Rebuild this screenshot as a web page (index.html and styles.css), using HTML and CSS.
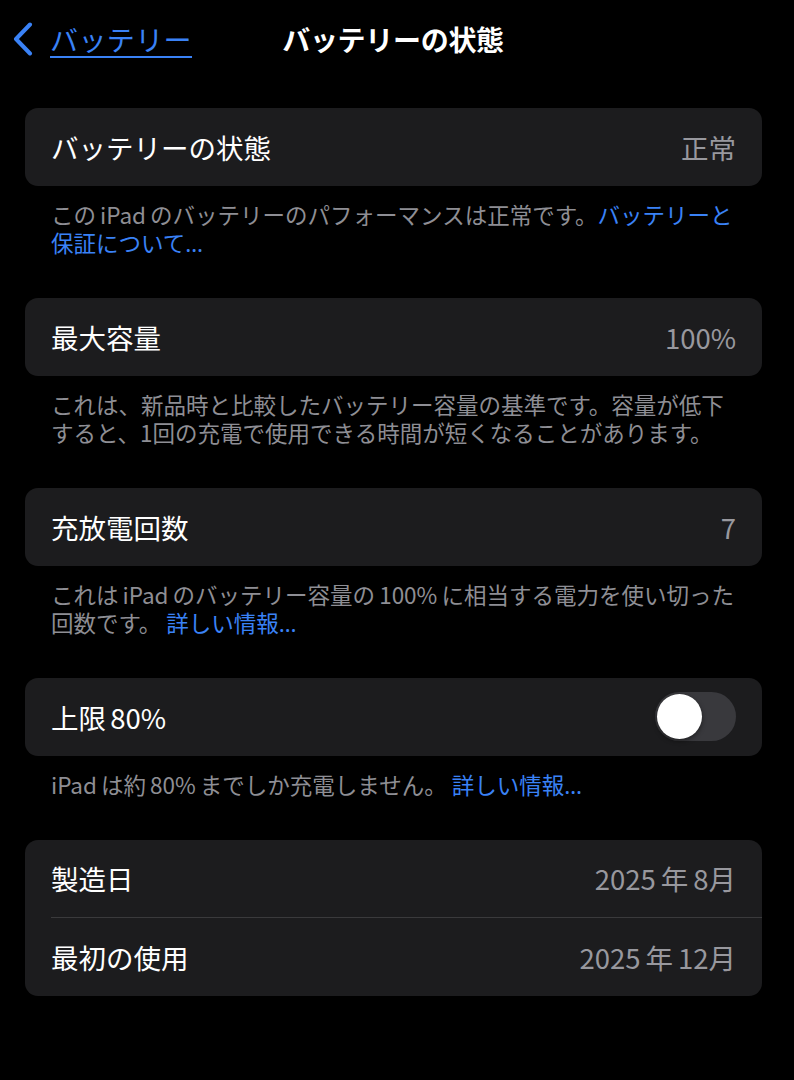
FILE: index.html
```html
<!DOCTYPE html>
<html lang="ja">
<head>
<meta charset="utf-8">
<title>バッテリーの状態</title>
<link rel="stylesheet" href="styles.css">
</head>
<body>
<div class="page">
  <header class="nav">
    <a class="back" href="#">
      <svg class="chev" width="22" height="34" viewBox="0 0 22 34"><polyline points="18,2.5 4,17 18,31.5" fill="none" stroke="#3a82f6" stroke-width="4" stroke-linecap="round" stroke-linejoin="round"/></svg>
      <span class="back-text">バッテリー</span>
    </a>
    <h1 class="title">バッテリーの状態</h1>
    <div class="nav-spacer"></div>
  </header>

  <main class="list">
    <section class="group">
      <div class="card">
        <div class="row"><span class="label">バッテリーの状態</span><span class="value">正常</span></div>
      </div>
      <p class="foot">この<span class="lat">iPad</span>のバッテリーのパフォーマンスは正常です。<a class="link" href="#">バッテリーと<br>保証について<span class="ell">…</span></a></p>
    </section>

    <section class="group">
      <div class="card">
        <div class="row"><span class="label">最大容量</span><span class="value">100%</span></div>
      </div>
      <p class="foot">これは、新品時と比較したバッテリー容量の基準です。容量が低下<br>すると、1回の充電で使用できる時間が短くなることがあります。</p>
    </section>

    <section class="group">
      <div class="card">
        <div class="row"><span class="label">充放電回数</span><span class="value">7</span></div>
      </div>
      <p class="foot">これは<span class="lat">iPad</span>のバッテリー容量の<span class="lat">100%</span>に相当する電力を使い切った<br>回数です。 <a class="link" href="#">詳しい情報<span class="ell">…</span></a></p>
    </section>

    <section class="group">
      <div class="card">
        <div class="row"><span class="label">上限<span class="latr">80%</span></span><span class="toggle"><span class="knob"></span></span></div>
      </div>
      <p class="foot"><span class="latr">iPad</span>は約<span class="lat">80%</span>までしか充電しません。 <a class="link" href="#">詳しい情報<span class="ell">…</span></a></p>
    </section>

    <section class="group">
      <div class="card">
        <div class="row"><span class="label">製造日</span><span class="value">2025<span class="lat">年</span>8月</span></div>
        <div class="sep"></div>
        <div class="row"><span class="label">最初の使用</span><span class="value">2025<span class="lat">年</span>12月</span></div>
      </div>
    </section>
  </main>
</div>
</body>
</html>
```

FILE: styles.css
```css
html, body {
  margin: 0;
  padding: 0;
  background: #000;
}

body {
  font-family: "Noto Sans CJK JP", "Noto Sans", sans-serif;
  color: #fff;
  width: 794px;
  height: 1080px;
  overflow: hidden;
}

.page {
  display: flex;
  flex-direction: column;
}

.nav {
  height: 78px;
  display: grid;
  grid-template-columns: 1fr auto 1fr;
  align-items: center;
  padding-right: 8px;
}

.back {
  display: flex;
  align-items: center;
  gap: 16px;
  padding-left: 12px;
  color: #3a82f6;
  text-decoration: none;
}

.chev {
  display: block;
  flex: none;
}

.back-text {
  font-size: 28px;
  line-height: 34px;
  text-decoration: underline;
  text-decoration-thickness: 2px;
  text-underline-offset: 5px;
  letter-spacing: 0.4px;
}

.title {
  margin: 0;
  font-size: 28px;
  font-weight: 700;
  line-height: 34px;
  letter-spacing: -0.3px;
}

.list {
  display: flex;
  flex-direction: column;
  gap: 41.5px;
  padding: 30px 32px 0 25px;
}

.card {
  background: #1c1c1e;
  border-radius: 13px;
  overflow: hidden;
}

.row {
  height: 77.5px;
  display: flex;
  align-items: center;
  justify-content: space-between;
  padding: 0 26px 0 26px;
}

.label {
  font-size: 27.5px;
  color: #fff;
}

.value {
  font-size: 27.5px;
  color: #98989e;
}

.sep {
  height: 1px;
  margin-left: 26px;
  background: #3a3a3c;
}

.lat {
  margin: 0 0.18em;
}

.latr {
  margin-left: 0.18em;
  margin-right: 0.12em;
}

.label .latr {
  margin-left: 0.15em;
}

.foot .latr {
  margin-left: 0;
  margin-right: 0.18em;
}

.foot {
  margin: 0;
  padding: 14px 10px 0 26px;
  font-size: 22.5px;
  line-height: 28.5px;
  color: #8e8e94;
}

.ell {
  font-family: "Noto Sans", sans-serif;
  line-height: 0;
}

.link {
  color: #3a82f6;
  text-decoration: none;
}

.toggle {
  width: 81px;
  height: 49px;
  border-radius: 25px;
  background: #39393d;
  display: flex;
  align-items: center;
  padding-left: 2px;
  box-sizing: border-box;
}

.knob {
  width: 45px;
  height: 45px;
  border-radius: 50%;
  background: #fff;
  box-shadow: 0 2px 5px rgba(0, 0, 0, 0.45);
}
```
